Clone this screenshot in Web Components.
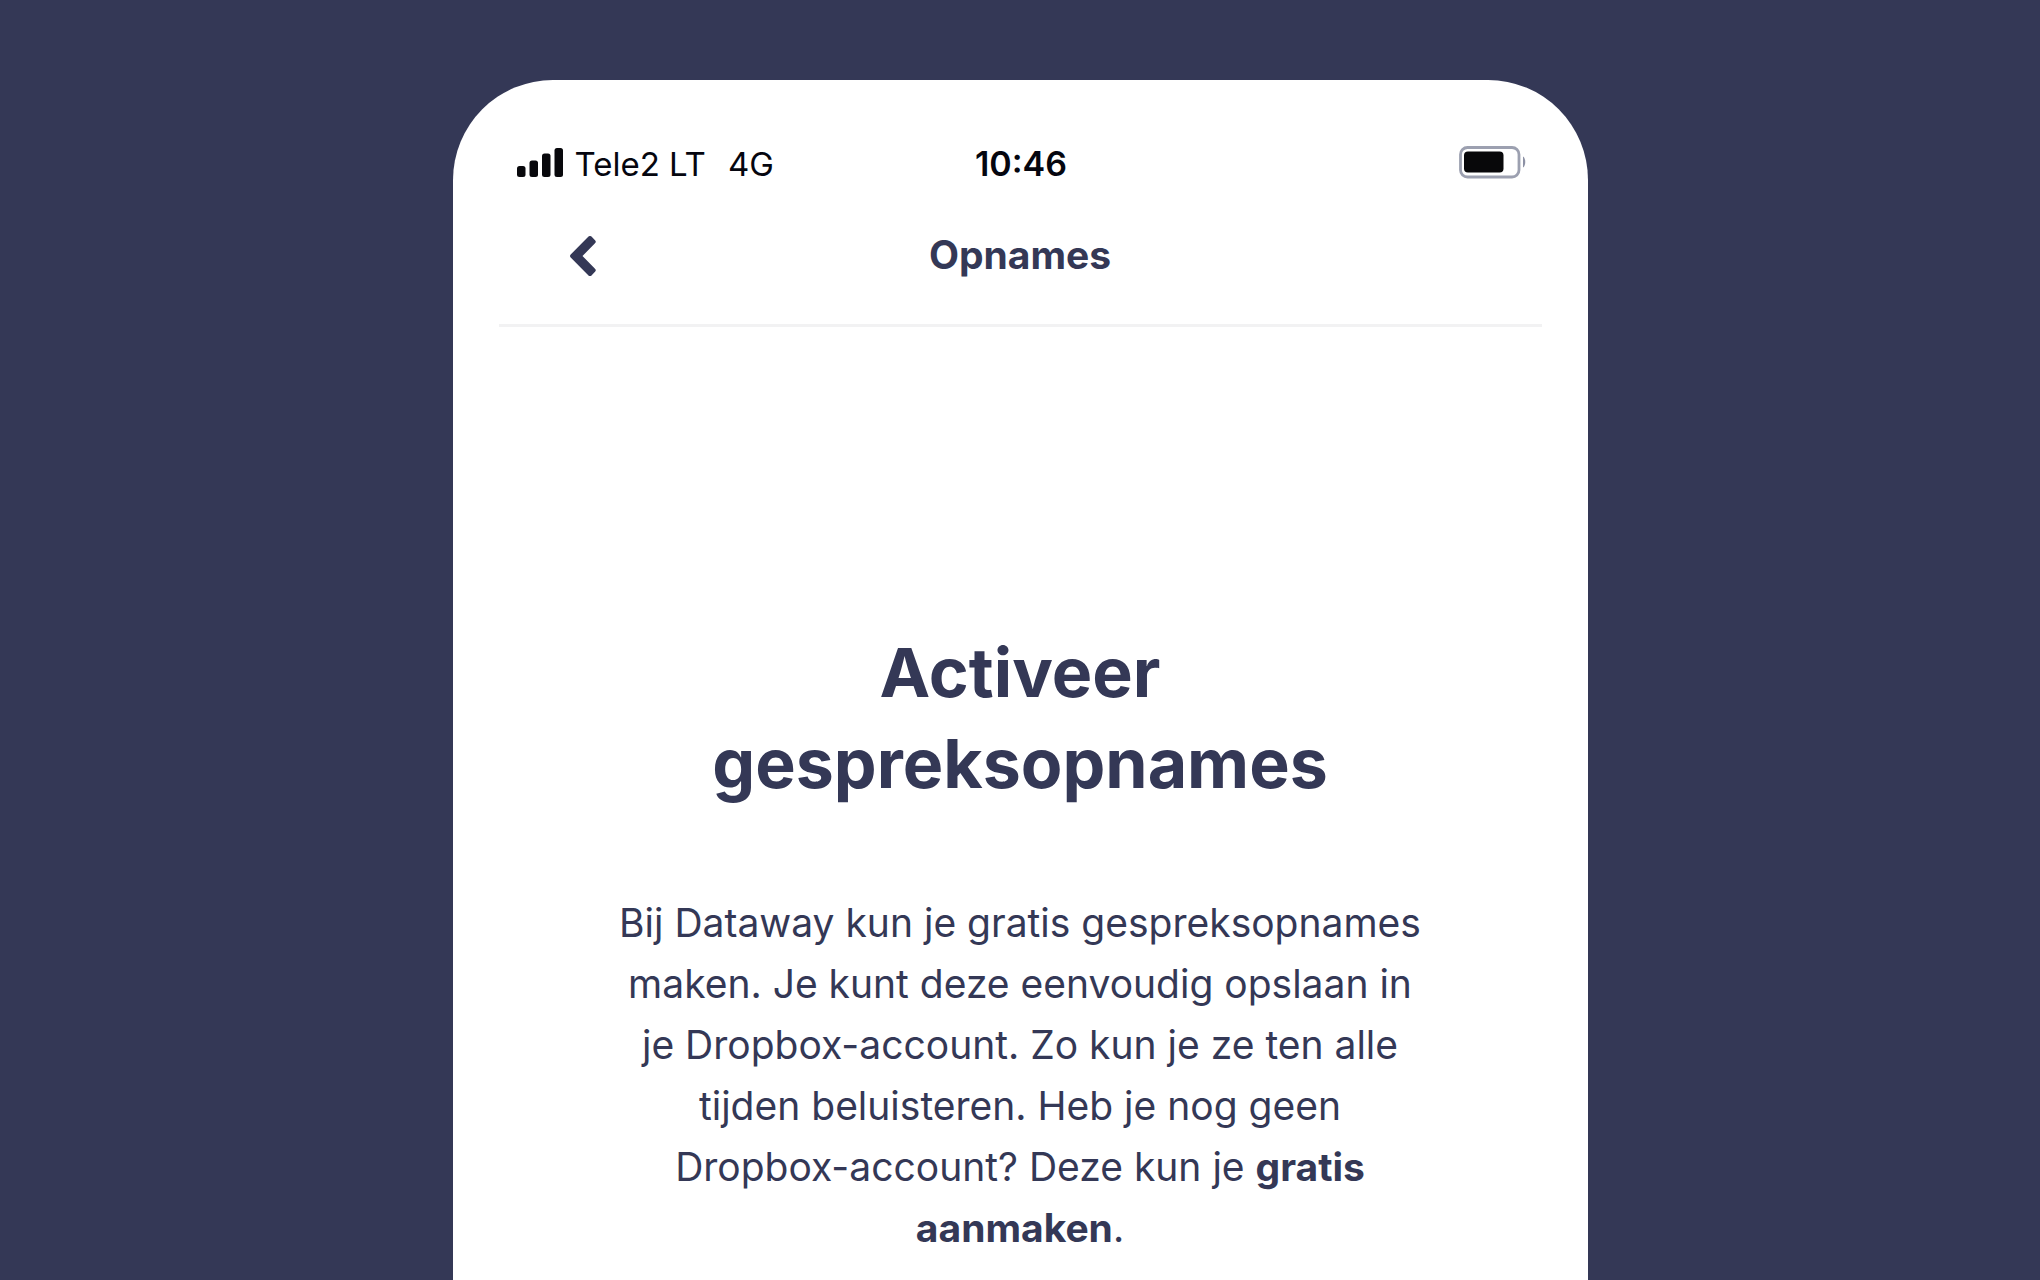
<!DOCTYPE html>
<html lang="nl">
<head>
<meta charset="utf-8">
<meta name="viewport" content="width=device-width, initial-scale=1">
<title>Opnames</title>
<style>
  html, body { height: 100%; margin: 0; }
  body { background: #343856; overflow: hidden; }
</style>
</head>
<body>
<recordings-page></recordings-page>

<template id="page-template">
  <style>
    :host {
      display: flex;
      justify-content: center;
      box-sizing: border-box;
      min-height: 100%;
      padding: 80px 32px 0;
      background: #343856;
      color: #343856;
      font-family: Inter, "Open Sans", sans-serif;
    }
    a { color: inherit; font-weight: 700; text-decoration: none; }
  </style>
  <phone-frame>
    <status-bar slot="status" carrier="Tele2 LT" network="4G" time="10:46"></status-bar>
    <nav-header slot="header">Opnames</nav-header>
    <intro-message>
      <span slot="title">Activeer gespreksopnames</span>
      Bij Dataway kun je gratis gespreksopnames maken. Je kunt deze eenvoudig opslaan in je Dropbox-account. Zo kun je ze ten alle tijden beluisteren. Heb je nog geen Dropbox-account? Deze kun je <a href="#aanmaken">gratis aanmaken</a>.
    </intro-message>
  </phone-frame>
</template>

<template id="frame-template">
  <style>
    :host {
      display: flex;
      flex-direction: column;
      box-sizing: border-box;
      width: 100%;
      max-width: 1135px;
      padding: 60px 46px 0;
      border-radius: 100px 100px 0 0;
      background: #fff;
    }
  </style>
  <slot name="status"></slot>
  <slot name="header"></slot>
  <slot></slot>
</template>

<template id="status-template">
  <style>
    :host {
      display: grid;
      grid-template-columns: 1fr auto 1fr;
      align-items: center;
      padding: 0 16px 0 18px;
      color: #05060f;
      font: 400 33px/48px Inter, sans-serif;
    }
    .left { display: flex; align-items: center; gap: 12px; }
    .network { margin-left: 10px; }
    .time { font-size: 34px; font-weight: 600; }
    .battery { justify-self: end; }
    svg { display: block; }
  </style>
  <div class="left">
    <svg width="46" height="32" viewBox="0 0 46 32" fill="#08080c" aria-hidden="true">
      <rect x="0" y="18" width="8.500" height="11" rx="2.500"/>
      <rect x="12.500" y="12.500" width="8.500" height="16.500" rx="2.500"/>
      <rect x="25" y="5.500" width="8.500" height="23.500" rx="2.500"/>
      <rect x="37.500" y="0" width="8.500" height="29" rx="2.500"/>
    </svg>
    <span class="carrier"></span>
    <span class="network"></span>
  </div>
  <span class="time"></span>
  <svg class="battery" width="67" height="38" viewBox="0 0 67 38" aria-hidden="true">
    <rect x="1.500" y="2.500" width="58.500" height="29.500" rx="7" fill="#fff" stroke="#9ca0b0" stroke-width="2.800"/>
    <rect x="5" y="6.500" width="39.500" height="21" rx="4" fill="#08080a"/>
    <path d="M64 11.500c3 1.500 3 9.500 0 11z" fill="#8d91a5"/>
  </svg>
</template>

<template id="header-template">
  <style>
    :host {
      display: grid;
      grid-template-columns: 1fr auto 1fr;
      align-items: center;
      height: 136px;
      border-bottom: 3px solid #f2f2f3;
    }
    button {
      justify-self: start;
      margin: 0 0 0 59px;
      padding: 12px;
      border: 0;
      background: none;
      color: inherit;
      cursor: pointer;
    }
    svg { display: block; }
    h2 { margin: 0; padding-bottom: 2px; font-size: 39px; line-height: 48px; font-weight: 700; }
  </style>
  <button type="button" aria-label="Terug">
    <svg width="26" height="40" viewBox="0 0 26 40" fill="currentColor" aria-hidden="true">
      <path d="M18.500.600q1.500-1.300 3 0l3.500 3.600q1.600 1.500 0 3L12.500 20 25 32.800q1.600 1.500 0 3l-3.500 3.600q-1.500 1.300-3 0L.700 21.500q-1.400-1.500 0-3z"/>
    </svg>
  </button>
  <h2><slot></slot></h2>
</template>

<template id="intro-template">
  <style>
    :host { display: block; padding: 300px 120px 64px; text-align: center; }
    h1 { margin: 0 auto 83px; max-width: 700px; font-size: 68px; line-height: 91px; font-weight: 700; }
    p { margin: 0; font-size: 39px; line-height: 61px; }
  </style>
  <h1><slot name="title"></slot></h1>
  <p><slot></slot></p>
</template>

<script>
  class TemplateElement extends HTMLElement {
    constructor() {
      super();
      const template = document.getElementById(this.constructor.template);
      this.attachShadow({ mode: "open" }).append(template.content.cloneNode(true));
    }
  }

  class PhoneFrame extends TemplateElement { static template = "frame-template"; }
  class NavHeader extends TemplateElement { static template = "header-template"; }
  class IntroMessage extends TemplateElement { static template = "intro-template"; }
  class RecordingsPage extends TemplateElement { static template = "page-template"; }

  class StatusBar extends TemplateElement {
    static template = "status-template";
    connectedCallback() {
      for (const name of ["carrier", "network", "time"]) {
        this.shadowRoot.querySelector("." + name).textContent = this.getAttribute(name);
      }
    }
  }

  customElements.define("status-bar", StatusBar);
  customElements.define("nav-header", NavHeader);
  customElements.define("intro-message", IntroMessage);
  customElements.define("phone-frame", PhoneFrame);
  customElements.define("recordings-page", RecordingsPage);
</script>
</body>
</html>
